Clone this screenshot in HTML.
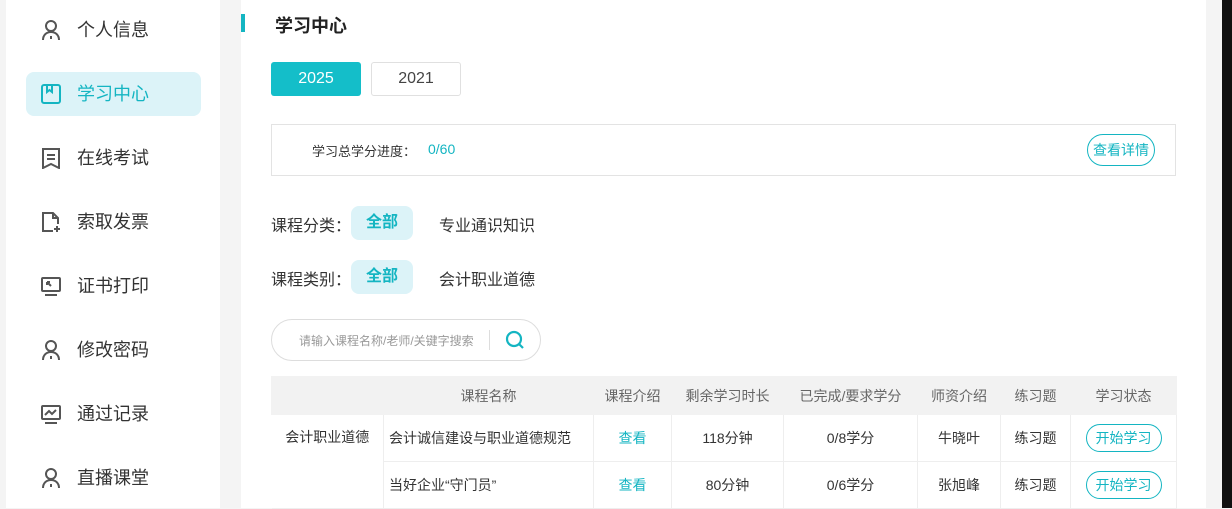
<!DOCTYPE html>
<html><head><meta charset="utf-8"><style>
*{margin:0;padding:0;box-sizing:border-box}
body{width:1232px;height:508px;overflow:hidden;background:#f4f4f4;font-family:"Liberation Sans","Noto Sans CJK SC",sans-serif;position:relative;color:#333}
.side{position:absolute;left:6px;top:0;width:214px;height:508px;background:#fff}
.item{position:absolute;left:20px;width:175px;height:44px;border-radius:8px;font-size:18px;color:#333;line-height:44px;padding-left:51px}
.item.act{background:#dcf3f8;color:#14b5c2}
.item svg{position:absolute;left:14px;top:11px}
.main{position:absolute;left:241px;top:0;width:965px;height:508px;background:#fff}
.black{position:absolute;left:1222px;top:0;width:10px;height:508px;background:#111}
.a{position:absolute}
table{position:absolute;left:271px;top:376px;border-collapse:collapse;font-size:14px;color:#333}
td,th{border:1px solid #eee;text-align:center;font-weight:normal}
th{background:#f2f2f2;color:#666;height:38px;border-color:#f2f2f2}
td{height:47px}
.btn{display:inline-block;border:1px solid #14b5c2;color:#14b5c2;border-radius:15px;padding:0 9px;height:28px;line-height:26px;font-size:14px}
.cy{color:#14b5c2}
</style></head><body>
<div class="side">
<div class="item" style="top:8px"><svg width="22" height="22" viewBox="0 0 22 22" fill="none" stroke="#555" stroke-width="2"><circle cx="11" cy="7" r="5"/><path d="M3 21c0-5 3.5-8 8-8s8 3 8 8"/><path d="M11 17v3"/></svg>个人信息</div>
<div class="item act" style="top:72px"><svg width="22" height="22" viewBox="0 0 22 22" fill="none" stroke="#14b5c2" stroke-width="2"><rect x="2" y="2" width="18" height="18" rx="2"/><path d="M7 2v7l2.5-2 2.5 2V2"/></svg>学习中心</div>
<div class="item" style="top:136px"><svg width="22" height="22" viewBox="0 0 22 22" fill="none" stroke="#555" stroke-width="2"><path d="M3 2h16v19l-8-4-8 4z"/><path d="M7 8h8M7 12h8"/></svg>在线考试</div>
<div class="item" style="top:200px"><svg width="22" height="22" viewBox="0 0 22 22" fill="none" stroke="#555" stroke-width="2"><path d="M13 20H3V2h10l5 5v6"/><path d="M13 2v5h5M17 15v6M14 18h6"/></svg>索取发票</div>
<div class="item" style="top:264px"><svg width="22" height="22" viewBox="0 0 22 22" fill="none" stroke="#555" stroke-width="2"><rect x="2" y="3" width="18" height="13" rx="1"/><path d="M5 20h12M7 7l4 4M7 7h3M7 7v3"/></svg>证书打印</div>
<div class="item" style="top:328px"><svg width="22" height="22" viewBox="0 0 22 22" fill="none" stroke="#555" stroke-width="2"><circle cx="11" cy="7" r="5"/><path d="M3 21c0-5 3.5-8 8-8s8 3 8 8"/><path d="M11 17v3"/></svg>修改密码</div>
<div class="item" style="top:392px"><svg width="22" height="22" viewBox="0 0 22 22" fill="none" stroke="#555" stroke-width="2"><rect x="2" y="3" width="18" height="13" rx="1"/><path d="M5 20h12M5 12l4-4 3 3 4-4"/></svg>通过记录</div>
<div class="item" style="top:456px"><svg width="22" height="22" viewBox="0 0 22 22" fill="none" stroke="#555" stroke-width="2"><circle cx="11" cy="7" r="5"/><path d="M3 21c0-5 3.5-8 8-8s8 3 8 8"/><path d="M11 17v3"/></svg>直播课堂</div>
</div>
<div class="main"></div>
<div class="black"></div>
<div class="a" style="left:241px;top:14px;width:4px;height:18px;background:#14b5c2"></div>
<div class="a" style="left:275px;top:12px;font-size:18px;font-weight:bold;color:#222">学习中心</div>
<div class="a" style="left:271px;top:62px;width:90px;height:34px;background:#14bec9;border-radius:3px;color:#fff;font-size:16px;line-height:34px;text-align:center">2025</div>
<div class="a" style="left:371px;top:62px;width:90px;height:34px;border:1px solid #e0e0e0;border-radius:3px;color:#444;font-size:16px;line-height:32px;text-align:center">2021</div>
<div class="a" style="left:271px;top:124px;width:905px;height:52px;border:1px solid #e3e3e3"></div>
<div class="a" style="left:312px;top:141px;font-size:13px;color:#333">学习总学分进度：</div>
<div class="a cy" style="left:428px;top:141px;font-size:14px;line-height:17px">0/60</div>
<div class="a" style="left:1087px;top:134px;width:68px;height:32px;border:1px solid #14b5c2;border-radius:16px;color:#14b5c2;font-size:14px;line-height:30px;text-align:center">查看详情</div>
<div class="a" style="left:271px;top:212px;font-size:16px">课程分类：</div>
<div class="a" style="left:351px;top:206px;width:62px;height:34px;background:#dcf3f8;border-radius:8px;color:#14b5c2;font-size:16px;font-weight:bold;line-height:34px;text-align:center">全部</div>
<div class="a" style="left:439px;top:212px;font-size:16px">专业通识知识</div>
<div class="a" style="left:271px;top:266px;font-size:16px">课程类别：</div>
<div class="a" style="left:351px;top:260px;width:62px;height:34px;background:#dcf3f8;border-radius:8px;color:#14b5c2;font-size:16px;font-weight:bold;line-height:34px;text-align:center">全部</div>
<div class="a" style="left:439px;top:266px;font-size:16px">会计职业道德</div>
<div class="a" style="left:271px;top:319px;width:270px;height:42px;border:1px solid #ddd;border-radius:21px"></div>
<div class="a" style="left:299px;top:332px;font-size:12px;color:#999">请输入课程名称/老师/关键字搜索</div>
<div class="a" style="left:489px;top:330px;width:1px;height:20px;background:#ddd"></div>
<svg class="a" style="left:505px;top:330px" width="20" height="20" viewBox="0 0 20 20" fill="none" stroke="#14b5c2" stroke-width="2.2"><circle cx="9" cy="9" r="7"/><path d="M14 14l4 4"/></svg>
<table>
<tr><th style="width:112px"></th><th style="width:210px">课程名称</th><th style="width:78px">课程介绍</th><th style="width:112px">剩余学习时长</th><th style="width:134px">已完成/要求学分</th><th style="width:83px">师资介绍</th><th style="width:70px">练习题</th><th style="width:106px">学习状态</th></tr>
<tr><td rowspan="2" style="vertical-align:top;padding-top:12px;border-left:none">会计职业道德</td><td style="text-align:left;padding-left:5px">会计诚信建设与职业道德规范</td><td class="cy">查看</td><td>118分钟</td><td>0/8学分</td><td>牛晓叶</td><td>练习题</td><td><span class="btn">开始学习</span></td></tr>
<tr><td style="text-align:left;padding-left:5px">当好企业“守门员”</td><td class="cy">查看</td><td>80分钟</td><td>0/6学分</td><td>张旭峰</td><td>练习题</td><td><span class="btn">开始学习</span></td></tr>
</table>
</body></html>
